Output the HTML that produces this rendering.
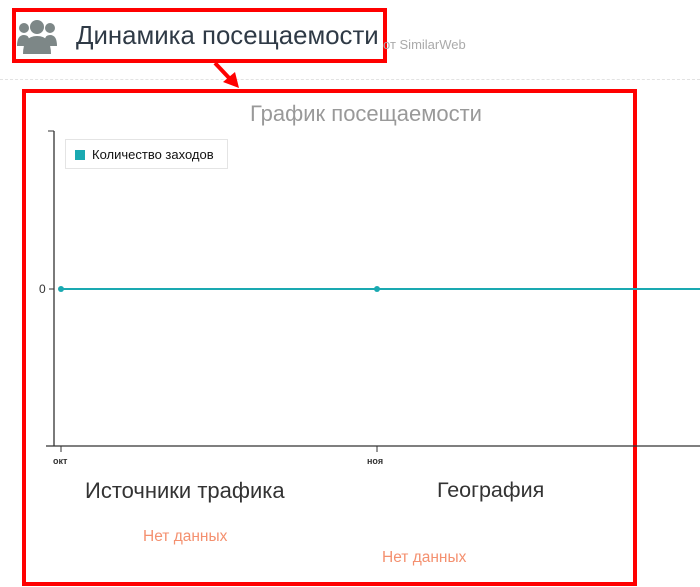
<!DOCTYPE html>
<html><head><meta charset="utf-8"><style>
*{margin:0;padding:0;box-sizing:border-box}
body{width:700px;height:587px;background:#fff;position:relative;overflow:hidden;font-family:"Liberation Sans",sans-serif}
.a{position:absolute;white-space:nowrap}
</style></head><body>
<div class="a" style="left:12px;top:8px;width:375px;height:55px;border:4px solid #f00"></div>
<svg class="a" style="left:17px;top:18px" width="40" height="38" viewBox="0 0 40 38">
<g fill="#7d8787">
<circle cx="7" cy="10" r="5"/><circle cx="33" cy="10" r="5"/><circle cx="20" cy="9" r="7"/>
<path d="M0 28 Q0 17 7 17 Q12 17 12 22 L12 28Z"/>
<path d="M40 28 Q40 17 33 17 Q28 17 28 22 L28 28Z"/>
<path d="M6 36 Q6 18 20 18 Q34 18 34 36Z"/>
</g></svg>
<div class="a" style="left:76px;top:22px;font-size:25.8px;color:#2f3a46">Динамика посещаемости</div>
<div class="a" style="left:383px;top:37px;font-size:13px;color:#aaa">от SimilarWeb</div>
<div class="a" style="left:0;top:79px;width:700px;border-top:1px dashed #e2e2e2"></div>
<svg class="a" style="left:205px;top:60px" width="40" height="32"><line x1="10" y1="3" x2="26" y2="20" stroke="#f00" stroke-width="4"/><polygon points="18,22 34,28 30,12" fill="#f00"/></svg>
<div class="a" style="left:22px;top:89px;width:615px;height:497px;border:4px solid #f00"></div>
<div class="a" style="left:250px;top:101px;font-size:22px;color:#999">График посещаемости</div>
<svg class="a" style="left:0;top:0" width="700" height="587">
<line x1="54" y1="131" x2="54" y2="446" stroke="#333" stroke-width="1.3"/>
<line x1="48" y1="131" x2="54" y2="131" stroke="#333"/>
<line x1="46" y1="446" x2="700" y2="446" stroke="#333" stroke-width="1.3"/>
<line x1="49" y1="289" x2="54" y2="289" stroke="#333"/>
<line x1="61" y1="446" x2="61" y2="452" stroke="#333"/>
<line x1="377" y1="446" x2="377" y2="452" stroke="#333"/>
<line x1="61" y1="289" x2="700" y2="289" stroke="#1aa9b1" stroke-width="2"/>
<circle cx="61" cy="289" r="3" fill="#1aa9b1"/><circle cx="377" cy="289" r="3" fill="#1aa9b1"/>
<text x="39" y="293" font-size="12" fill="#333" font-family="Liberation Sans">0</text>
<text x="53" y="464" font-size="9" font-weight="bold" fill="#333" font-family="Liberation Sans">окт</text>
<text x="367" y="464" font-size="9" font-weight="bold" fill="#333" font-family="Liberation Sans">ноя</text>
</svg>
<div class="a" style="left:65px;top:139px;width:163px;height:30px;border:1px solid #e4e4e4;background:#fff"></div>
<div class="a" style="left:75px;top:150px;width:10px;height:10px;background:#1aa9b1"></div>
<div class="a" style="left:92px;top:147px;font-size:13px;color:#111">Количество заходов</div>
<div class="a" style="left:85px;top:478px;font-size:22px;color:#333">Источники трафика</div>
<div class="a" style="left:437px;top:478px;font-size:21.5px;color:#333">География</div>
<div class="a" style="left:143px;top:528px;font-size:15.5px;color:#f4906f">Нет данных</div>
<div class="a" style="left:382px;top:549px;font-size:15.5px;color:#f4906f">Нет данных</div>
</body></html>
